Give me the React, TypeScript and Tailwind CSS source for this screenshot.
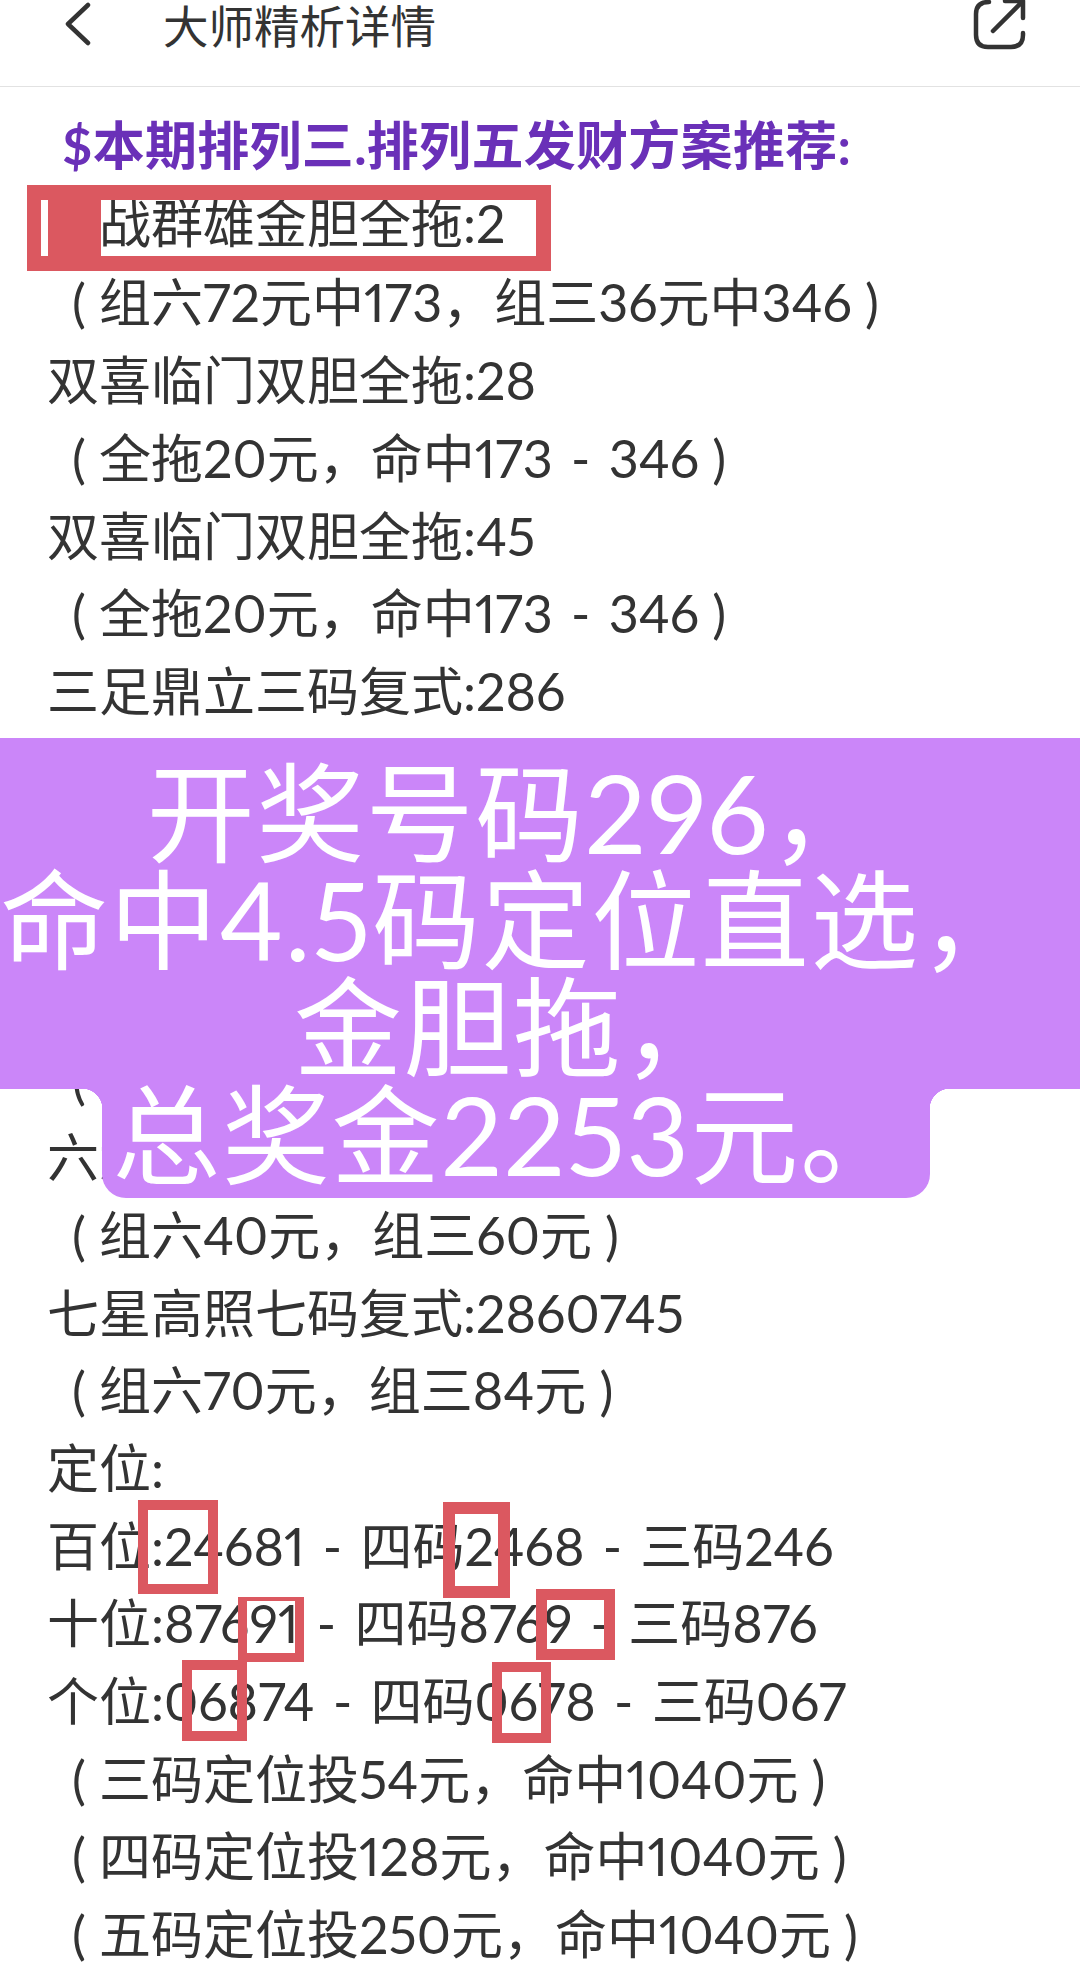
const LINES = [
    '（组六72元中173，组三36元中346）',
    '双喜临门双胆全拖:28',
    '（全拖20元，命中173 - 346）',
    '双喜临门双胆全拖:45',
    '（全拖20元，命中173 - 346）',
    '三足鼎立三码复式:286',
    '（组六6元，组三12元）',
    '四季发财四码复式:2860',
    '（组六24元，组三24元）',
    '五福临门五码复式:28607',
    '（组六20元，组三40元）',
    '六六大顺六码复式:286074',
    '（组六40元，组三60元）',
    '七星高照七码复式:2860745',
    '（组六70元，组三84元）',
    '定位:',
    '百位:24681 - 四码2468 - 三码246',
    '十位:87691 - 四码8769 - 三码876',
    '个位:06874 - 四码0678 - 三码067',
    '（三码定位投54元，命中1040元）',
    '（四码定位投128元，命中1040元）',
    '（五码定位投250元，命中1040元）',
]

const BANNER = ['开奖号码296，', '命中4.5码定位直选，', '金胆拖，']

// Caixas vermelhas desenhadas por cima do texto
const MARKS = [
    'left-[138px] top-[1500px] h-[94px] w-[80px] border-[10px]',
    'left-[443px] top-[1502px] h-[96px] w-[67px] border-[12px]',
    'left-[238px] top-[1597px] h-[65px] w-[66px] border-[9px] border-t-[4px]',
    'left-[536px] top-[1589px] h-[71px] w-[79px] border-[11px]',
    'left-[182px] top-[1660px] h-[81px] w-[65px] border-[10px]',
    'left-[492px] top-[1662px] h-[81px] w-[59px] border-[10px]',
]

// Parênteses ficam centrados na célula, como na fonte do aparelho
function PlanLine({ text }: { text: string }) {
    const open = text.startsWith('（')
    const close = text.endsWith('）')
    const body = text.slice(open ? 1 : 0, close ? -1 : undefined)
    return (
        <p className="whitespace-pre [word-spacing:5px]">
            {open && <span className="inline-block w-[52px] pl-[12px] text-center">(</span>}
            {body}
            {close && <span className="inline-block w-[52px] pr-[12px] text-center">)</span>}
        </p>
    )
}

export default function App() {
    return (
        <div className="relative h-[1968px] w-[1080px] overflow-hidden bg-white font-['Lato','Noto_Sans_CJK_SC',sans-serif] text-[#333333] proportional-nums">
            {/* Cabeçalho */}
            <header className="flex h-[87px] items-start justify-between border-b border-[#e2e2e2] pl-[64px] pr-[52px]">
                <div className="flex items-start">
                    <svg className="mt-[2px] h-[44px] w-[30px]" viewBox="0 0 30 44" fill="none" stroke="#333333" strokeWidth="4.5" strokeLinecap="round" strokeLinejoin="round">
                        <path d="M24 3L4 22L24 41" />
                    </svg>
                    <span className="ml-[69px] text-[45.5px] leading-[54px]">大师精析详情</span>
                </div>
                <svg className="h-[50px] w-[58px]" viewBox="0 0 58 50" fill="none" stroke="#333333" strokeWidth="4.5" strokeLinecap="round" strokeLinejoin="round">
                    <path d="M19 2C10 2 6 6 6 14V35C6 43 10 47 18 47H41C49 47 53 43 53 35V33" />
                    <path d="M23 31L52 2M35 1H53V18" />
                </svg>
            </header>

            {/* Texto do plano */}
            <main className="pl-[47px] pt-[20px] text-[52px] leading-[77.7px]">
                <p className="pl-[15px] font-bold tracking-[0.3px] text-[#6a30b8]">$本期排列三.排列五发财方案推荐:</p>
                <p className="mb-[2px] pl-[52px]">战群雄金胆全拖:2</p>
                {LINES.map((line, i) => (
                    <PlanLine key={i} text={line} />
                ))}
            </main>

            {/* Faixa roxa sobreposta */}
            <div className="absolute inset-x-0 top-[738px] flex flex-col items-start text-center text-[108px] leading-[107px] tracking-[1.5px] text-white">
                <div className="w-full bg-[#cb86f9] pb-[9px] pr-[54px] pt-[21px]">
                    {BANNER.map((line) => (
                        <p key={line} className="whitespace-pre">{line}</p>
                    ))}
                </div>
                <div className="relative ml-[102px] h-[109px] w-[828px] rounded-b-[24px] bg-[#cb86f9] pr-[10px]">
                    <span className="absolute -left-[20px] top-0 size-[20px] bg-[#cb86f9] [mask-image:radial-gradient(circle_at_0_100%,transparent_20px,black_20.5px)]" />
                    <span className="absolute -right-[20px] top-0 size-[20px] bg-[#cb86f9] [mask-image:radial-gradient(circle_at_100%_100%,transparent_20px,black_20.5px)]" />
                    <p className="-mt-[8px] whitespace-pre">总奖金2253元。</p>
                </div>
            </div>

            {/* Marcações vermelhas */}
            <div className="absolute left-[27px] top-[185px] h-[86px] w-[524px] border-y-[15px] border-l-[74px] border-r-[15px] border-[#db5860]">
                <span className="absolute -left-[60px] top-0 h-[56px] w-[7px] bg-white" />
            </div>
            {MARKS.map((mark) => (
                <div key={mark} className={`absolute border-[#db5860] ${mark}`} />
            ))}
        </div>
    )
}
